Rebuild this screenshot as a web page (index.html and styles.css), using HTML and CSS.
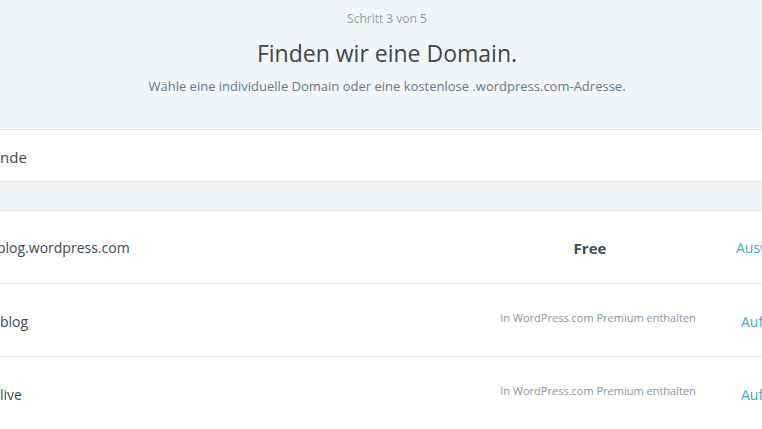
FILE: index.html
```html
<!DOCTYPE html>
<html lang="de">
<head>
<meta charset="utf-8">
<link rel="stylesheet" href="styles.css">
</head>
<body>
<div class="page">
  <header class="head">
    <div class="step">Schritt 3 von 5</div>
    <h1 class="title">Finden wir eine Domain.</h1>
    <p class="sub">Wähle eine individuelle Domain oder eine kostenlose .wordpress.com-Adresse.</p>
  </header>
  <div class="search"><span class="query">nde</span></div>
  <div class="strip"></div>
  <div class="list">
    <div class="row">
      <div class="name name-cut">blog.wordpress.com</div>
      <div class="price"><span class="free">Free</span></div>
      <div class="action act-1">Auswählen</div>
    </div>
    <div class="row">
      <div class="name">blog</div>
      <div class="price"><span class="incl">In WordPress.com Premium enthalten</span></div>
      <div class="action act-2">Aufrüsten</div>
    </div>
    <div class="row">
      <div class="name">live</div>
      <div class="price"><span class="incl">In WordPress.com Premium enthalten</span></div>
      <div class="action act-2">Aufrüsten</div>
    </div>
  </div>
</div>
</body>
</html>
```
FILE: styles.css
```css
html, body {
  margin: 0;
  padding: 0;
  background: #ffffff;
  overflow: hidden;
}
body {
  font-family: "Open Sans", "Noto Sans", sans-serif;
  color: #3d4a52;
  width: 762px;
  height: 429px;
}
.page {
  width: 762px;
  overflow: hidden;
}
.head {
  background: #f3f6f8;
  height: 129px;
  border-bottom: 1px solid #dfe5ea;
  display: flex;
  flex-direction: column;
  align-items: center;
  padding-left: 12px;
}
.step {
  margin-top: 11px;
  font-size: 12px;
  line-height: 16px;
  color: #8f9ba4;
}
.title {
  margin: 11px 0 0;
  font-size: 23px;
  line-height: 30px;
  font-weight: 400;
  color: #3a4850;
}
.sub {
  margin: 9px 0 0;
  font-size: 13px;
  line-height: 18px;
  color: #66788a;
}
.search {
  height: 51px;
  background: #ffffff;
  border-bottom: 1px solid #dfe5ea;
  display: flex;
  align-items: center;
}
.query {
  font-size: 15px;
  color: #3d4a52;
  margin-top: 2px;
}
.strip {
  height: 28px;
  background: #f3f6f8;
  border-bottom: 1px solid #dfe5ea;
}
.list {
  width: 762px;
  overflow: hidden;
}
.row {
  height: 72px;
  border-bottom: 1px solid #dfe5ea;
  display: flex;
  align-items: center;
  white-space: nowrap;
}
.name {
  flex: 1;
  font-size: 14px;
  color: #3d4a52;
  margin-top: 2px;
}
.name-cut {
  margin-left: -3px;
  margin-top: 1px;
}
.price {
  width: 288px;
  display: flex;
  justify-content: center;
}
.free {
  font-size: 15px;
  font-weight: 700;
  color: #3d4a52;
  margin-top: 1px;
  margin-right: 4px;
}
.incl {
  font-size: 11px;
  color: #8a969e;
  margin-top: -5px;
  margin-left: 12px;
}
.action {
  width: 26px;
  flex: none;
  overflow: hidden;
  font-size: 14px;
  color: #3aaec6;
}
.act-1 {
  margin-top: 1px;
}
.act-2 {
  padding-left: 5px;
  width: 21px;
  margin-top: 3px;
}
```
